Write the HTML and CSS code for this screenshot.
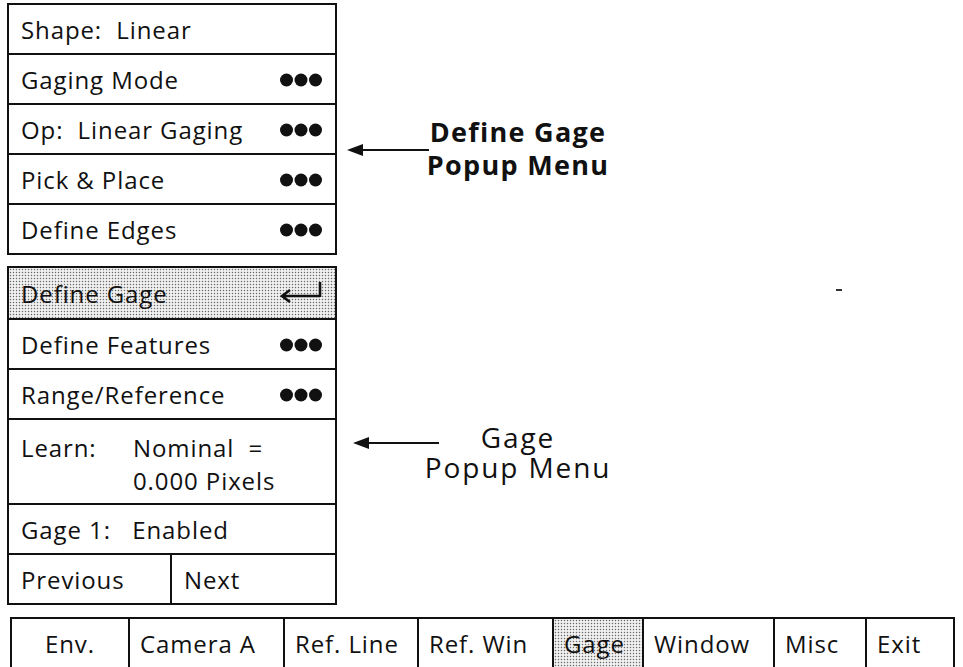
FILE: index.html
```html
<!DOCTYPE html>
<html>
<head>
<meta charset="utf-8">
<link rel="stylesheet" href="styles.css">
</head>
<body>
<div class="page">
  <div class="menus">
    <div class="menu">
      <div class="row"><span>Shape:&nbsp; Linear</span></div>
      <div class="row"><span>Gaging Mode</span><svg class="dots" viewBox="0 0 42 14"><circle cx="6.5" cy="7" r="6.5"/><circle cx="21" cy="7" r="6.5"/><circle cx="35.5" cy="7" r="6.5"/></svg></div>
      <div class="row"><span>Op:&nbsp; Linear Gaging</span><svg class="dots" viewBox="0 0 42 14"><circle cx="6.5" cy="7" r="6.5"/><circle cx="21" cy="7" r="6.5"/><circle cx="35.5" cy="7" r="6.5"/></svg></div>
      <div class="row"><span>Pick &amp; Place</span><svg class="dots" viewBox="0 0 42 14"><circle cx="6.5" cy="7" r="6.5"/><circle cx="21" cy="7" r="6.5"/><circle cx="35.5" cy="7" r="6.5"/></svg></div>
      <div class="row"><span>Define Edges</span><svg class="dots" viewBox="0 0 42 14"><circle cx="6.5" cy="7" r="6.5"/><circle cx="21" cy="7" r="6.5"/><circle cx="35.5" cy="7" r="6.5"/></svg></div>
    </div>
    <div class="menu second">
      <div class="row selected"><span>Define Gage</span><svg class="enter" viewBox="0 0 42 24"><path d="M2 17 H40 M40 3 V18 M10 11 L2 17 L10 23"/></svg></div>
      <div class="row"><span>Define Features</span><svg class="dots" viewBox="0 0 42 14"><circle cx="6.5" cy="7" r="6.5"/><circle cx="21" cy="7" r="6.5"/><circle cx="35.5" cy="7" r="6.5"/></svg></div>
      <div class="row"><span>Range/Reference</span><svg class="dots" viewBox="0 0 42 14"><circle cx="6.5" cy="7" r="6.5"/><circle cx="21" cy="7" r="6.5"/><circle cx="35.5" cy="7" r="6.5"/></svg></div>
      <div class="row learn"><span class="lbl">Learn:</span><span class="val">Nominal&nbsp; =<br>0.000 Pixels</span></div>
      <div class="row"><span>Gage 1:&nbsp;&nbsp; Enabled</span></div>
      <div class="row split"><div class="cell prev">Previous</div><div class="cell next">Next</div></div>
    </div>
  </div>

  <svg class="arrow a1" viewBox="0 0 82 14"><path class="shaft" d="M10 7 H82"/><path class="head" d="M0 7 L16 1 L16 13 Z"/></svg>
  <div class="callout c1">Define Gage<br>Popup Menu</div>

  <svg class="arrow a2" viewBox="0 0 86 14"><path class="shaft" d="M10 7 H86"/><path class="head" d="M0 7 L16 1 L16 13 Z"/></svg>
  <div class="callout c2">Gage<br>Popup Menu</div>

  <span class="speck"></span>

  <div class="tabbar">
    <div class="tab env">Env.</div>
    <div class="tab">Camera A</div>
    <div class="tab">Ref. Line</div>
    <div class="tab">Ref. Win</div>
    <div class="tab active">Gage</div>
    <div class="tab">Window</div>
    <div class="tab">Misc</div>
    <div class="tab">Exit</div>
  </div>
</div>
</body>
</html>
```

FILE: styles.css
```css
* { box-sizing: border-box; }
html, body { margin: 0; padding: 0; background: #fff; }
body {
  font-family: "Open Sans", "Noto Sans", sans-serif;
  color: #111;
  font-size: 24px;
  letter-spacing: 0.9px;
  width: 963px;
  height: 667px;
  overflow: hidden;
}
.page {
  position: relative;
  width: 963px;
  height: 667px;
  padding: 3px 0 0 7px;
}
.menus {
  display: flex;
  flex-direction: column;
  gap: 11px;
  width: 330px;
}
.menu {
  border: 2px solid #111;
  border-bottom: none;
  display: flex;
  flex-direction: column;
}
.row {
  height: 50px;
  border-bottom: 2px solid #111;
  display: flex;
  align-items: center;
  justify-content: space-between;
  padding: 1px 13px 0 12px;
  white-space: nowrap;
}
.second .row.selected { height: 52px; }
.selected {
  background-color: #f1f1f1;
  background-image: radial-gradient(circle, #6a6a6a 0.75px, transparent 1.05px);
  background-size: 3px 3px;
}
.dots { width: 42px; height: 14px; fill: #111; flex: none; }
.enter { width: 42px; height: 24px; fill: none; stroke: #111; stroke-width: 2.6; margin-top: -6px; flex: none; }
.row.learn {
  height: 85px;
  justify-content: flex-start;
  align-items: flex-start;
  padding-top: 11px;
  line-height: 33px;
}
.learn .lbl { width: 112px; }
.row.split { padding: 0; justify-content: flex-start; align-items: stretch; }
.split .cell { display: flex; align-items: center; padding: 1px 12px 0 12px; }
.split .prev { width: 163px; border-right: 2px solid #111; }

.arrow { position: absolute; }
.arrow .shaft { stroke: #111; stroke-width: 2; fill: none; }
.arrow .head { fill: #111; }
.a1 { left: 347px; top: 143px; width: 82px; height: 14px; }
.a2 { left: 353px; top: 436px; width: 86px; height: 14px; }
.callout {
  position: absolute;
  text-align: center;
  white-space: nowrap;
}
.c1 { left: 408px; top: 115px; width: 220px; line-height: 33px; font-weight: 700; font-size: 27px; letter-spacing: 1.3px; }
.c2 { left: 408px; top: 422px; width: 220px; line-height: 30px; font-size: 28px; letter-spacing: 1.9px; }
.speck { position: absolute; left: 836px; top: 289px; width: 6px; height: 2px; background: #333; }

.tabbar {
  margin-top: 12px;
  margin-left: 3px;
  display: grid;
  grid-template-columns: 118px 155px 134px 135px 90px 131px 92px 90px;
  height: 52px;
  border: 2px solid #111;
  width: 945px;
}
.tab {
  display: flex;
  align-items: center;
  padding: 1px 0 0 10px;
  border-right: 2px solid #111;
  white-space: nowrap;
}
.tab:last-child { border-right: none; }
.tab.env { padding-left: 33px; }
.tab.active {
  background-color: #f1f1f1;
  background-image: radial-gradient(circle, #6a6a6a 0.75px, transparent 1.05px);
  background-size: 3px 3px;
}
```
